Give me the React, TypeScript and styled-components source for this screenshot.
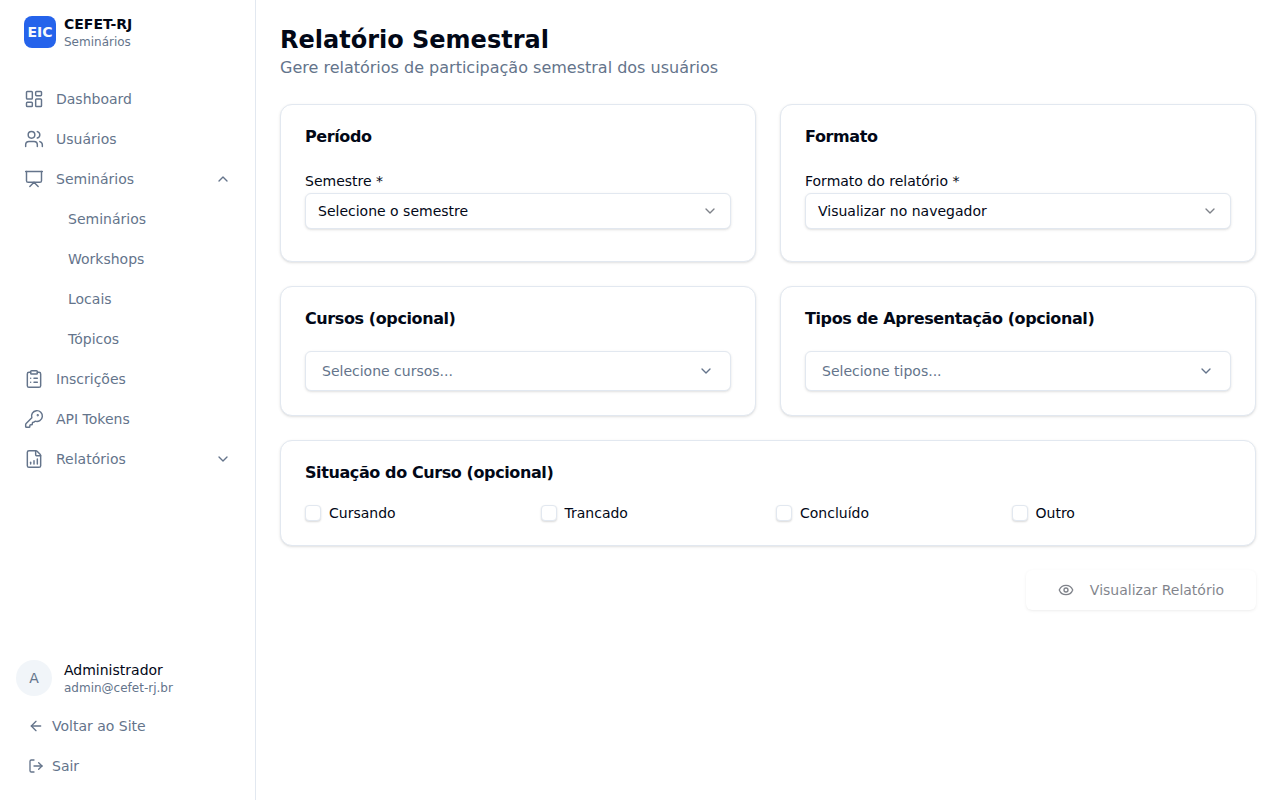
import React from 'react';
import styled, { createGlobalStyle } from 'styled-components';
import {
  LayoutDashboard, Users, Presentation, ClipboardList, KeyRound, FileChartColumnIncreasing,
  ChevronUp, ChevronDown, ArrowLeft, LogOut, Eye,
} from 'lucide-react';

const Global = createGlobalStyle`
  * { box-sizing: border-box; }
  html, body { margin: 0; padding: 0; height: 100%; background: #fff; }
  body { font-family: "DejaVu Sans", sans-serif; color: #020817; }
`;

const Shell = styled.div`
  display: flex;
  width: 1280px;
  height: 800px;
  overflow: hidden;
`;

const Sidebar = styled.aside`
  width: 256px;
  flex: none;
  display: flex;
  flex-direction: column;
  border-right: 1px solid #e2e8f0;
`;

const Brand = styled.div`
  display: flex;
  align-items: flex-start;
  gap: 8px;
  padding: 16px 24px 0;
  height: 79px;
`;

const BrandMark = styled.div`
  width: 32px;
  height: 32px;
  border-radius: 8px;
  background: #2563eb;
  color: #f8fafc;
  font-weight: 700;
  font-size: 14px;
  display: flex;
  align-items: center;
  justify-content: center;
`;

const BrandText = styled.div`
  display: flex;
  flex-direction: column;
  gap: 2px;
`;

const BrandName = styled.span`
  font-size: 14px;
  font-weight: 700;
  line-height: 16px;
`;

const BrandSub = styled.span`
  font-size: 12px;
  line-height: 16px;
  color: #64748b;
`;

const Nav = styled.nav`
  display: flex;
  flex-direction: column;
  flex: 1;
`;

const NavItem = styled.a<{ $sub?: boolean }>`
  display: flex;
  align-items: center;
  gap: 12px;
  height: 40px;
  padding: 0 24px 0 ${p => (p.$sub ? '68px' : '24px')};
  font-size: 14px;
  color: #64748b;
  svg { flex: none; }
`;

const Grow = styled.span`
  flex: 1;
`;

const Footer = styled.div`
  display: flex;
  flex-direction: column;
  padding: 0 16px 14px;
`;

const UserRow = styled.div`
  display: flex;
  align-items: center;
  gap: 12px;
  height: 36px;
  margin-bottom: 10px;
`;

const Avatar = styled.div`
  width: 36px;
  height: 36px;
  border-radius: 50%;
  background: #f1f5f9;
  color: #64748b;
  font-size: 14px;
  display: flex;
  align-items: center;
  justify-content: center;
`;

const UserInfo = styled.div`
  display: flex;
  flex-direction: column;
`;

const UserName = styled.span`
  font-size: 14px;
  line-height: 20px;
`;

const UserMail = styled.span`
  font-size: 12px;
  line-height: 16px;
  color: #64748b;
`;

const FootLink = styled.a`
  display: flex;
  align-items: center;
  gap: 8px;
  height: 40px;
  padding: 0 12px;
  font-size: 14px;
  color: #64748b;
`;

const Main = styled.main`
  flex: 1;
  padding: 24px;
  display: flex;
  flex-direction: column;
`;

const Title = styled.h1`
  margin: 0;
  font-size: 24px;
  line-height: 32px;
  font-weight: 700;
`;

const Subtitle = styled.p`
  margin: 0 0 24px;
  font-size: 16px;
  line-height: 24px;
  color: #64748b;
`;

const Grid = styled.div`
  display: grid;
  grid-template-columns: 1fr 1fr;
  gap: 24px;
`;

const Card = styled.section<{ $wide?: boolean }>`
  grid-column: ${p => (p.$wide ? '1 / -1' : 'auto')};
  background: #fff;
  border: 1px solid #e2e8f0;
  border-radius: 12px;
  box-shadow: 0 1px 3px 0 rgba(0,0,0,.1), 0 1px 2px -1px rgba(0,0,0,.1);
  padding: 24px;
`;

const CardTitle = styled.h2<{ $mb: number }>`
  margin: 0 0 ${p => p.$mb}px;
  font-size: 16px;
  line-height: 16px;
  font-weight: 700;
  letter-spacing: -0.4px;
`;

const Field = styled.div`
  padding: 2px 0 8px;
`;

const Label = styled.div`
  font-size: 14px;
  line-height: 20px;
  height: 22px;
`;

const Select = styled.div<{ $large?: boolean }>`
  display: flex;
  align-items: center;
  justify-content: space-between;
  height: ${p => (p.$large ? '40px' : '36px')};
  padding: 0 ${p => (p.$large ? '16px' : '12px')};
  border: 1px solid #e2e8f0;
  border-radius: 6px;
  background: #fff;
  box-shadow: 0 1px 3px 0 rgba(0,0,0,.1), 0 1px 2px -1px rgba(0,0,0,.1);
  font-size: 14px;
  color: ${p => (p.$large ? '#64748b' : '#020817')};
  svg { opacity: ${p => (p.$large ? 1 : 0.5)}; }
`;

const Checks = styled.div`
  display: grid;
  grid-template-columns: repeat(4, 1fr);
  gap: 16px;
  margin-bottom: -1px;
`;

const Check = styled.label`
  display: flex;
  align-items: center;
  gap: 8px;
  height: 19px;
  font-size: 14px;
`;

const Box = styled.span`
  width: 16px;
  height: 16px;
  border: 1px solid #e2e8f0;
  border-radius: 4px;
  background: #fff;
  box-shadow: 0 1px 2px 0 rgba(0,0,0,.15);
`;

const Actions = styled.div`
  display: flex;
  justify-content: flex-end;
  margin-top: 24px;
`;

const Button = styled.button`
  display: flex;
  align-items: center;
  justify-content: center;
  gap: 16px;
  width: 230px;
  height: 40px;
  padding: 0;
  border: none;
  border-radius: 6px;
  background: #fff;
  box-shadow: 0 1px 3px 0 rgba(0,0,0,.1), 0 1px 2px -1px rgba(0,0,0,.1);
  font: inherit;
  font-size: 14px;
  color: #020817;
  opacity: .5;
`;

const mainNav = [
  { Icon: LayoutDashboard, label: 'Dashboard' },
  { Icon: Users, label: 'Usuários' },
];

const subNav = ['Seminários', 'Workshops', 'Locais', 'Tópicos'];

const checks = ['Cursando', 'Trancado', 'Concluído', 'Outro'];

export default function App() {
  return (
    <Shell>
      <Global />
      <Sidebar>
        <Brand>
          <BrandMark>EIC</BrandMark>
          <BrandText>
            <BrandName>CEFET-RJ</BrandName>
            <BrandSub>Seminários</BrandSub>
          </BrandText>
        </Brand>
        <Nav>
          {mainNav.map(({ Icon, label }) => (
            <NavItem key={label}><Icon size={20} strokeWidth={1.75} />{label}</NavItem>
          ))}
          <NavItem>
            <Presentation size={20} strokeWidth={1.75} />
            <Grow>Seminários</Grow>
            <ChevronUp size={16} />
          </NavItem>
          {subNav.map(label => <NavItem key={label} $sub>{label}</NavItem>)}
          <NavItem><ClipboardList size={20} strokeWidth={1.75} />Inscrições</NavItem>
          <NavItem><KeyRound size={20} strokeWidth={1.75} />API Tokens</NavItem>
          <NavItem>
            <FileChartColumnIncreasing size={20} strokeWidth={1.75} />
            <Grow>Relatórios</Grow>
            <ChevronDown size={16} />
          </NavItem>
        </Nav>
        <Footer>
          <UserRow>
            <Avatar>A</Avatar>
            <UserInfo>
              <UserName>Administrador</UserName>
              <UserMail>admin@cefet-rj.br</UserMail>
            </UserInfo>
          </UserRow>
          <FootLink><ArrowLeft size={16} />Voltar ao Site</FootLink>
          <FootLink><LogOut size={16} />Sair</FootLink>
        </Footer>
      </Sidebar>
      <Main>
        <Title>Relatório Semestral</Title>
        <Subtitle>Gere relatórios de participação semestral dos usuários</Subtitle>
        <Grid>
          <Card>
            <CardTitle $mb={24}>Período</CardTitle>
            <Field>
              <Label>Semestre *</Label>
              <Select>Selecione o semestre<ChevronDown size={16} /></Select>
            </Field>
          </Card>
          <Card>
            <CardTitle $mb={24}>Formato</CardTitle>
            <Field>
              <Label>Formato do relatório *</Label>
              <Select>Visualizar no navegador<ChevronDown size={16} /></Select>
            </Field>
          </Card>
          <Card>
            <CardTitle $mb={24}>Cursos (opcional)</CardTitle>
            <Select $large>Selecione cursos...<ChevronDown size={16} /></Select>
          </Card>
          <Card>
            <CardTitle $mb={24}>Tipos de Apresentação (opcional)</CardTitle>
            <Select $large>Selecione tipos...<ChevronDown size={16} /></Select>
          </Card>
          <Card $wide>
            <CardTitle $mb={22}>Situação do Curso (opcional)</CardTitle>
            <Checks>
              {checks.map(c => <Check key={c}><Box />{c}</Check>)}
            </Checks>
          </Card>
        </Grid>
        <Actions>
          <Button><Eye size={16} />Visualizar Relatório</Button>
        </Actions>
      </Main>
    </Shell>
  );
}
